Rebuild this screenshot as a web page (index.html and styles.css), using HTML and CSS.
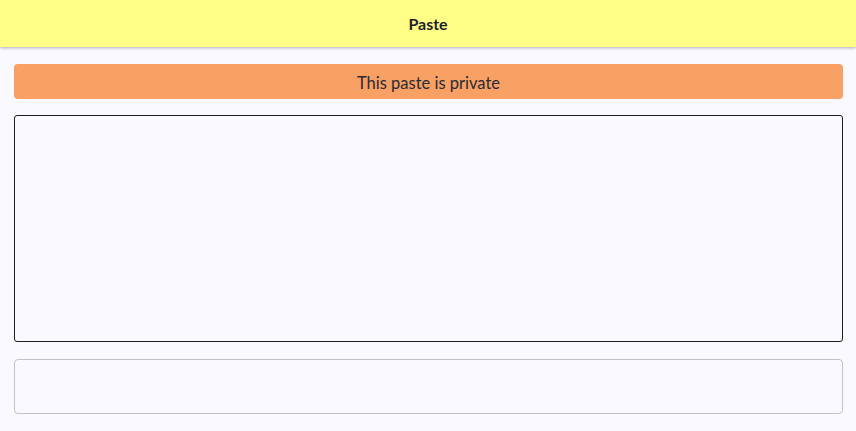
FILE: index.html
```html
<!DOCTYPE html>
<html>
<head>
<meta charset="utf-8">
<link rel="stylesheet" href="styles.css">
</head>
<body>
<header class="topbar"><h1 class="title">Paste</h1></header>
<main class="content">
  <div class="notice">This paste is private</div>
  <textarea class="editor"></textarea>
  <div class="field"></div>
</main>
</body>
</html>
```
FILE: styles.css
```css
html, body {
  margin: 0;
  padding: 0;
  background: #f9f9fe;
  font-family: Lato, "Noto Sans", sans-serif;
  color: #22222e;
}
.topbar {
  height: 47px;
  background: #ffff88;
  box-shadow: 0 1px 3px rgba(0,0,0,0.3);
  display: flex;
  align-items: center;
  justify-content: center;
}
.title {
  margin: 0;
  font-size: 16px;
  font-weight: 700;
  color: #1e1e2a;
}
.content {
  padding: 17px 13px 0 14px;
  display: flex;
  flex-direction: column;
}
.notice {
  box-sizing: border-box;
  height: 35px;
  padding-top: 2px;
  background: #f9a164;
  border-radius: 4px;
  display: flex;
  align-items: center;
  justify-content: center;
  font-size: 16.5px;
  color: #2a2a36;
}
.editor {
  display: block;
  box-sizing: border-box;
  height: 227px;
  width: 100%;
  margin: 16px 0 0;
  border: 1px solid #1c1c28;
  border-radius: 3px;
  background: #f9f9fe;
  resize: none;
  outline: none;
}
.field {
  box-sizing: border-box;
  height: 55px;
  margin-top: 17px;
  border: 1px solid #c2c2c8;
  border-radius: 4px;
  background: #f9f9fe;
}
```
